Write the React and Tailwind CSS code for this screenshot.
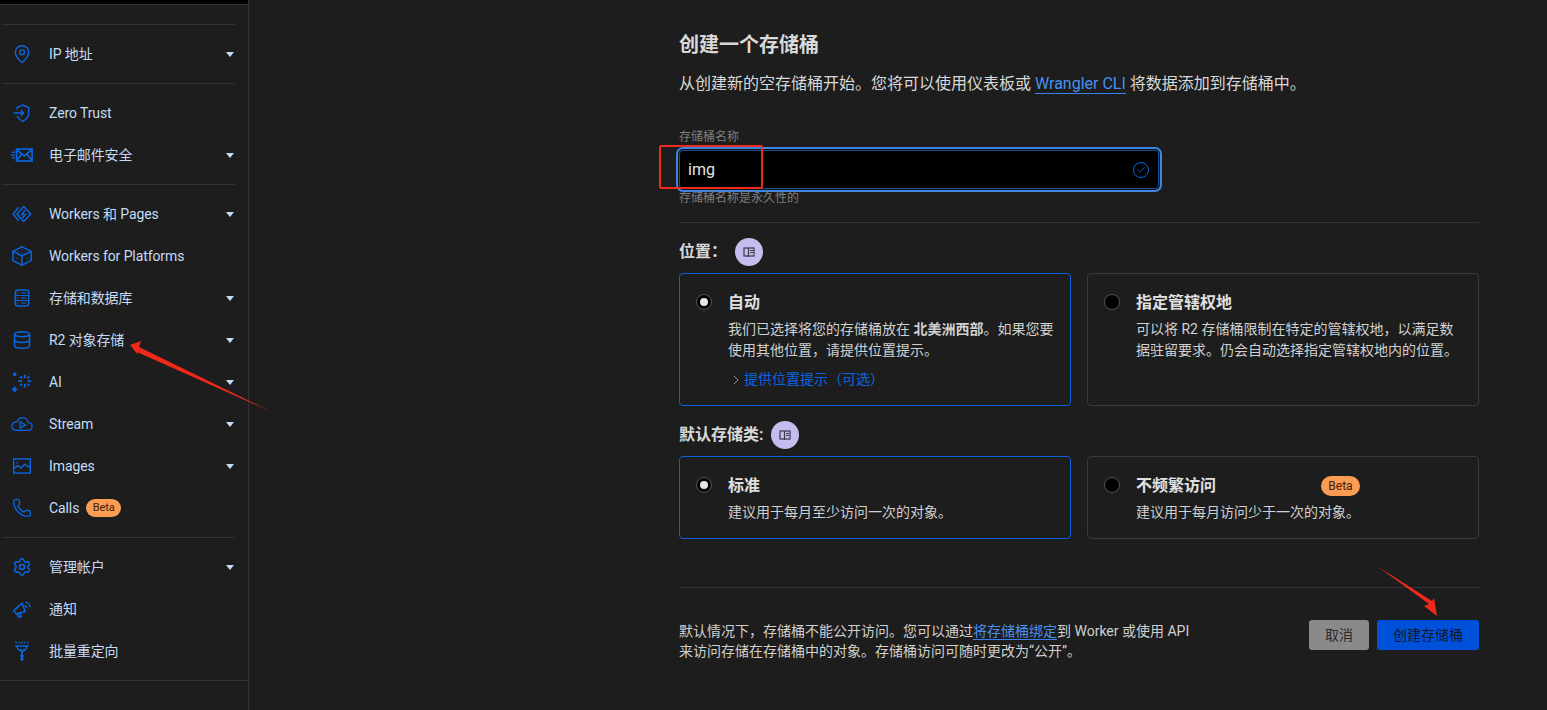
import React from 'react';
import { MapPin, Database, Phone, Settings, Check, ChevronRight } from 'lucide-react';

const font = "font-['Roboto','Noto_Sans_CJK_SC',sans-serif]";

function ShieldIcon() {
	return (
		<svg viewBox="0 0 24 24" className="h-5 w-5" fill="none" stroke="currentColor" strokeWidth="1.7">
			<path d="M6 8V5.5L13 2.500L20 5.500V12C20 17 17 20 13 22C10 20.500 7.500 18.500 6.200 15.500" />
			<path d="M2 12H13.500M10.500 8.500L14 12L10.500 15.500" />
		</svg>
	);
}

function MailIcon() {
	return (
		<svg viewBox="0 0 24 24" className="h-5 w-5 scale-110" fill="none" stroke="currentColor" strokeWidth="1.8">
			<rect x="6" y="5.500" width="17" height="13" />
			<path d="M6 6L14.500 13L23 6M6 18L11.500 11.500M23 18L17.500 11.500" />
			<path d="M1 9H4M0 12H4M1 15H4" />
		</svg>
	);
}

function WorkersIcon() {
	return (
		<svg viewBox="0 0 24 24" className="h-5 w-5" fill="none" stroke="currentColor" strokeWidth="1.8">
			<path d="M8 4L1.500 12L8 20" />
			<path d="M14 3L22.500 12L14 21L6 12Z" />
			<path d="M15.500 7.500L12 12.500H16L12.500 17" />
		</svg>
	);
}

function CubeIcon() {
	return (
		<svg viewBox="0 0 24 24" className="h-5 w-5 scale-110" fill="none" stroke="currentColor" strokeWidth="1.6">
			<path d="M12 2L22 7V17L12 22L2 17V7Z" />
			<path d="M2 7L12 12L22 7M12 12V22" />
			<path d="M12 5V5.800M8 7V7.800M16 7V7.800M12 8.500V9.300M6 14V14.800M18 14V14.800" strokeWidth="2" />
		</svg>
	);
}

function StorageIcon() {
	return (
		<svg viewBox="0 0 24 24" className="h-5 w-5" fill="none" stroke="currentColor" strokeWidth="1.8">
			<rect x="4" y="2.500" width="16" height="19" rx="3" />
			<path d="M4 9H20M4 15H20M11 6H17M11 12H17M11 18H17" strokeWidth="1.400" />
			<path d="M7 5.500V6.500M7 11.500V12.500M7 17.500V18.500" />
		</svg>
	);
}

function SparkIcon() {
	return (
		<svg viewBox="0 0 24 24" className="h-5 w-5 scale-110" fill="none" stroke="currentColor" strokeWidth="2">
			<path d="M15 4V8M15 14V18M8 11H12M18 11H22M10 6L12 8M20 6L18 8M10 16L12 14M20 16L18 14" />
			<path d="M2 3.500H6M4 1.500V5.500M1 20H7M4 17V23" />
		</svg>
	);
}

function StreamIcon() {
	return (
		<svg viewBox="0 0 24 24" className="h-5 w-5 scale-110" fill="none" stroke="currentColor" strokeWidth="1.4">
			<path d="M6 19H18C21 19 23 17 23 14.500C23 12 21 10.500 18.500 10.500C18 7 15.500 5 12.500 5C9.500 5 7.500 7 6.800 9.500C3.500 9.800 1 11.800 1 14.500C1 17 3 19 6 19Z" />
			<path d="M10 9.500L16 13L10 16.500Z" />
		</svg>
	);
}

function ImagesIcon() {
	return (
		<svg viewBox="0 0 24 24" className="h-5 w-5" fill="none" stroke="currentColor" strokeWidth="1.7">
			<rect x="2" y="3.500" width="20" height="17" />
			<path d="M2 15L7 11.500L11 14.500L15 10L22 14" />
			<circle cx="6" cy="8" r="1" fill="currentColor" stroke="none" />
		</svg>
	);
}

function MegaphoneIcon() {
	return (
		<svg viewBox="0 0 24 24" className="h-5 w-5" fill="none" stroke="currentColor" strokeWidth="1.8">
			<path d="M2 14L12 5L16 15L5 18Z" />
			<path d="M6 18L8.500 22L11 21L9 17" />
			<path d="M15 8C16.500 8 17.500 9 17.500 10.500M16 4C19 4 21.500 6.500 21.500 10" />
		</svg>
	);
}

function RedirectIcon() {
	return (
		<svg viewBox="0 0 24 24" className="h-5 w-5" fill="none" stroke="currentColor" strokeWidth="1.8">
			<path d="M5 1V3M9 1V3M12 1V3M15 1V3M19 1V3" />
			<path d="M4 6H20M6 6C6 10 9 12 12 12C15 12 18 10 18 6M9 9.500L12 12.500L15 9.500" />
			<path d="M12 12V24M10 18H14M10 21.500H14" strokeWidth="2.200" />
		</svg>
	);
}

const sections = [
	[{ icon: <MapPin className="h-5 w-5" strokeWidth={1.7} />, label: 'IP 地址', caret: true }],
	[
		{ icon: <ShieldIcon />, label: 'Zero Trust' },
		{ icon: <MailIcon />, label: '电子邮件安全', caret: true },
	],
	[
		{ icon: <WorkersIcon />, label: 'Workers 和 Pages', caret: true },
		{ icon: <CubeIcon />, label: 'Workers for Platforms' },
		{ icon: <StorageIcon />, label: '存储和数据库', caret: true },
		{ icon: <Database className="h-5 w-5" strokeWidth={1.8} />, label: 'R2 对象存储', caret: true },
		{ icon: <SparkIcon />, label: 'AI', caret: true },
		{ icon: <StreamIcon />, label: 'Stream', caret: true },
		{ icon: <ImagesIcon />, label: 'Images', caret: true },
		{ icon: <Phone className="h-5 w-5" strokeWidth={1.6} />, label: 'Calls', beta: true },
	],
	[
		{ icon: <Settings className="h-5 w-5" strokeWidth={1.8} />, label: '管理帐户', caret: true },
		{ icon: <MegaphoneIcon />, label: '通知' },
		{ icon: <RedirectIcon />, label: '批量重定向' },
	],
];

function NavRow({ icon, label, caret, beta }) {
	return (
		<div className="-ml-[2px] flex h-[42px] items-center pl-[12px] text-sm tracking-[-0.1px] text-[#c4dcf7]">
			<span className="flex w-[37px] shrink-0 items-center text-[#0a66e0]">{icon}</span>
			<span>{label}</span>
			{beta && (
				<span className="ml-[7px] flex h-[18px] w-[35px] items-center justify-center rounded-full bg-[#fc9b52] text-[11px] text-[#3b2110]">
					Beta
				</span>
			)}
			{caret && <span className="ml-auto mr-[1px] h-0 w-0 border-x-[4px] border-t-[5px] border-x-transparent border-t-[#c4dcf7]" />}
		</div>
	);
}

function Sidebar() {
	return (
		<aside className="h-[710px] w-[249px] shrink-0 border-r border-[#333333]">
			<div className="h-[4px] bg-black" />
			<div className="h-[20px] border-t border-[#333333]" />
			{sections.map((rows, i) => (
				<div key={i} className="ml-[2px] mr-[13px] border-t border-[#333333] py-2">
					{rows.map((row) => (
						<NavRow key={row.label} {...row} />
					))}
				</div>
			))}
			<div className="border-t border-[#333333]" />
		</aside>
	);
}

function BookBadge() {
	return (
		<span className="flex h-[28px] w-[28px] items-center justify-center rounded-full bg-[#c5bdf0] text-[#3a3a4a]">
			<svg viewBox="0 0 12 12" className="h-3 w-3" fill="none" stroke="currentColor" strokeWidth="1.200">
				<rect x="1" y="2" width="10" height="8" />
				<path d="M5.500 2V11" />
				<path d="M7 4.500H10M7 6.500H10" strokeWidth="1" />
			</svg>
		</span>
	);
}

function Radio({ checked }) {
	return (
		<span className="mt-[1px] flex h-4 w-4 shrink-0 items-center justify-center rounded-full border border-[#555555] bg-black">
			{checked && <span className="h-2 w-2 rounded-full bg-[#e5e5e5]" />}
		</span>
	);
}

function OptionCard({ checked, title, badge, height, children }) {
	return (
		<div className={`flex gap-4 rounded border px-4 pt-[19px] ${height} ${checked ? 'border-[#0b5fd9]' : 'border-[#3a3a3a]'}`}>
			<Radio checked={checked} />
			<div className="min-w-0 flex-1 text-sm leading-[21px] text-[#d0d0d0]">
				<div className="flex h-5 items-center text-base font-bold text-[#e0e0e0]">
					<span className="w-[185px]">{title}</span>
					{badge && (
						<span className="flex h-[20px] w-[39px] items-center justify-center rounded-full bg-[#fc9b52] text-xs font-normal text-[#3b2110]">
							Beta
						</span>
					)}
				</div>
				<div className="mt-[6px]">{children}</div>
			</div>
		</div>
	);
}

function Arrow({ points }) {
	return (
		<svg className="pointer-events-none absolute left-0 top-0" width="1547" height="710">
			<polygon points={points} fill="#f0291b" />
		</svg>
	);
}

export default function App() {
	return (
		<div className={`relative flex h-[710px] w-[1547px] overflow-hidden bg-[#1d1d1d] ${font}`}>
			<Sidebar />
			<main className="ml-[430px] w-[800px] pt-[31px] text-[#d9d9d9]">
				<h1 className="text-xl leading-[28px] font-bold">创建一个存储桶</h1>
				<p className="mt-[12px] text-base leading-[26px]">
					从创建新的空存储桶开始。您将可以使用仪表板或{' '}
					<a className="border-b border-[#3b82f0] text-[#4a90f0]">Wrangler CLI</a> 将数据添加到存储桶中。
				</p>
				<label className="mt-[32px] block text-xs leading-[16px] text-[#7d7d7d]">存储桶名称</label>
				<div className="mt-[5px] flex h-[39px] w-[480px] items-center rounded border border-[#1d4f8f] bg-black pl-[8px] pr-[9px] text-base text-[#e5e5e5] ring-[2px] ring-[#3b87e8] ring-offset-1 ring-offset-[#111111]">
					<span>img</span>
					<span className="ml-auto flex h-4 w-4 items-center justify-center rounded-full border border-[#0a66e0] text-[#0a66e0]">
						<Check className="h-[10px] w-[10px]" strokeWidth={2} />
					</span>
				</div>
				<p className="mt-[1px] text-xs leading-[16px] text-[#7d7d7d]">存储桶名称是永久性的</p>
				<hr className="mt-[16px] border-[#333333]" />

				<div className="mt-[15px] flex items-center gap-[8px] text-base font-bold">
					<span>位置：</span>
					<BookBadge />
				</div>
				<div className="mt-[7px] grid grid-cols-2 gap-4">
					<OptionCard checked title="自动" height="h-[133px]">
						<p>
							我们已选择将您的存储桶放在 <b>北美洲西部</b>。如果您要使用其他位置，请提供位置提示。
						</p>
						<div className="mt-[8px] flex items-center text-[#0a66e0]">
							<ChevronRight className="h-4 w-4 text-[#aaaaaa]" strokeWidth={1.25} />
							<span>提供位置提示（可选）</span>
						</div>
					</OptionCard>
					<OptionCard title="指定管辖权地" height="h-[133px]">
						可以将 R2 存储桶限制在特定的管辖权地，以满足数据驻留要求。仍会自动选择指定管辖权地内的位置。
					</OptionCard>
				</div>

				<div className="mt-[15px] flex items-center gap-[7px] text-base font-bold">
					<span>默认存储类:</span>
					<BookBadge />
				</div>
				<div className="mt-[7px] grid grid-cols-2 gap-4">
					<OptionCard checked title="标准" height="h-[83px]">
						建议用于每月至少访问一次的对象。
					</OptionCard>
					<OptionCard title="不频繁访问" badge height="h-[83px]">
						建议用于每月访问少于一次的对象。
					</OptionCard>
				</div>

				<hr className="mt-[48px] border-[#333333]" />
				<div className="mt-[32px] flex items-start justify-between">
					<p className="mt-[1px] w-[515px] text-sm leading-[20px] text-[#d0d0d0]">
						默认情况下，存储桶不能公开访问。您可以通过<a className="border-b border-[#3b82f0] text-[#4a90f0]">将存储桶绑定</a>到 Worker 或使用 API 来访问存储在存储桶中的对象。存储桶访问可随时更改为“公开”。
					</p>
					<div className="flex gap-2">
						<button className="h-[30px] w-[60px] rounded-[3px] bg-[#8a8a8a] text-sm text-[#2a2a2a]">取消</button>
						<button className="h-[30px] w-[102px] rounded-[3px] bg-[#0051d9] text-sm text-[#111827]">创建存储桶</button>
					</div>
				</div>
			</main>

			{/* red annotations drawn on top of the screenshot */}
			<div className="absolute left-[659px] top-[145px] h-[44px] w-[104px] rounded-[2px] border-2 border-[#ee2a1e]" />
			<Arrow points="130,345 141,341 139,347 272,412 137,352 138,355" />
			<Arrow points="1437,616 1424,606 1429,604 1377,566 1432,601 1434,598" />
		</div>
	);
}
